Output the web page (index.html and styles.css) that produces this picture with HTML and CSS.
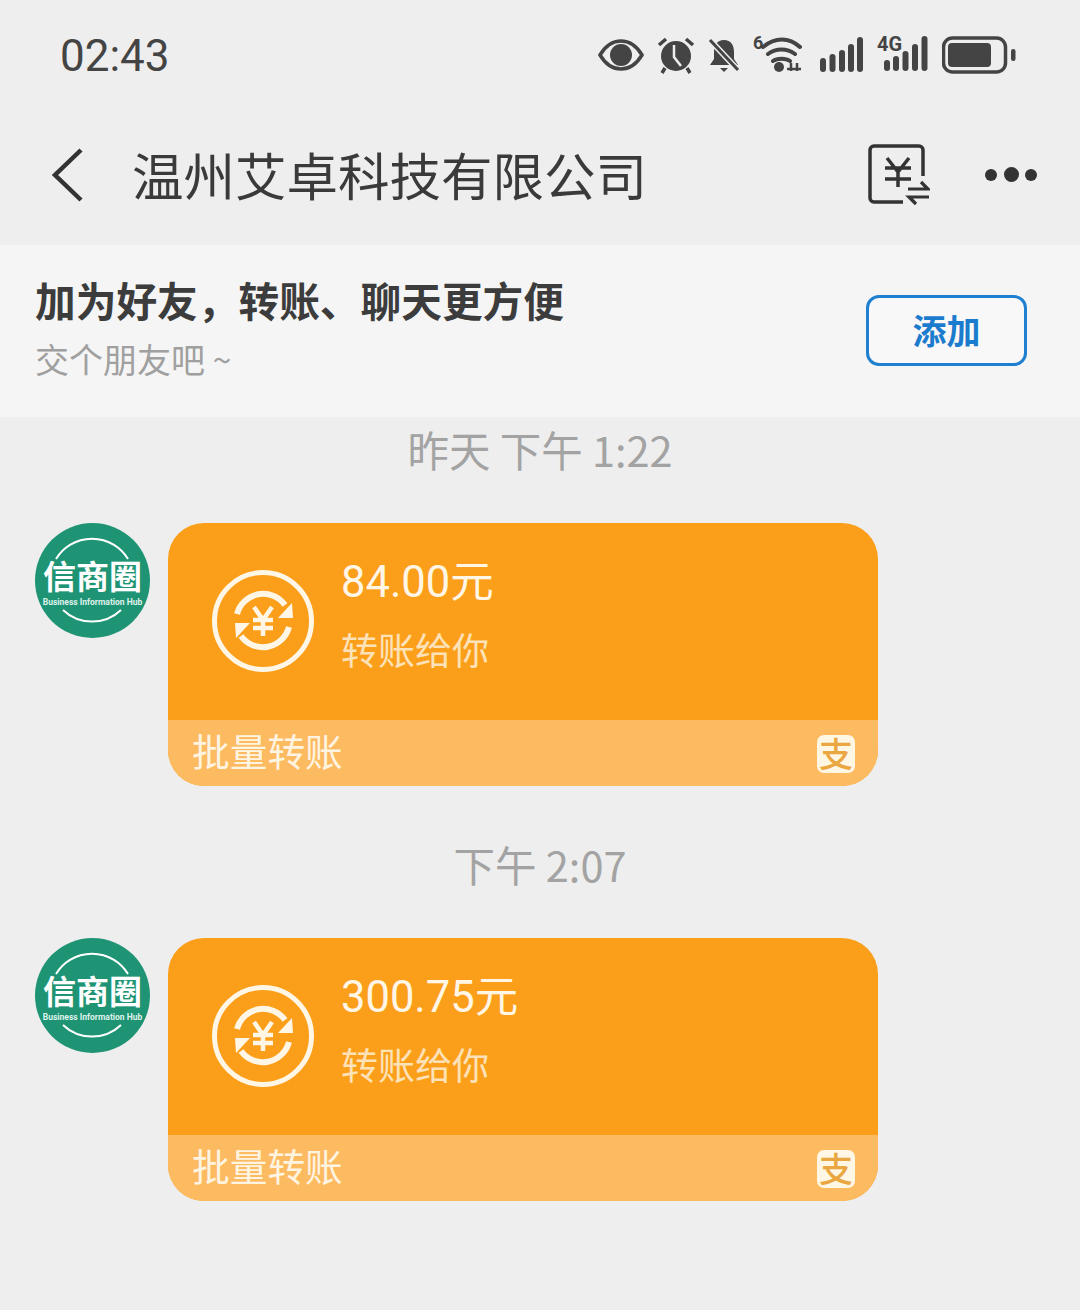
FILE: index.html
```html
<!DOCTYPE html>
<html lang="zh-CN">
<head>
    <meta charset="UTF-8">
    <title>温州艾卓科技有限公司</title>
    <link rel="stylesheet" href="styles.css">
</head>
<body>
    <svg class="defs" width="0" height="0">
        <symbol id="transfer" viewBox="0 0 102 102">
            <circle cx="51" cy="51" r="48.5" fill="none" stroke="#fff6e6" stroke-width="5"/>
            <path d="M25 44A27 27 0 0 1 73 35" fill="none" stroke="#fff6e6" stroke-width="6"/>
            <path d="M66 48L81 48 80 33z" fill="#fff6e6"/>
            <path d="M77 57A27 27 0 0 1 29 66" fill="none" stroke="#fff6e6" stroke-width="6"/>
            <path d="M23 53L38 53 24 68z" fill="#fff6e6"/>
            <path d="M42 37l9 13 9-13M51 50v16M41 50h20M41 58h20" fill="none" stroke="#fff6e6" stroke-width="4.500"/>
        </symbol>
        <symbol id="arcs" viewBox="0 0 115 115">
            <path d="M21 36A42 42 0 0 1 93 36M28 87A42 42 0 0 0 86 87" fill="none" stroke="#fff" stroke-width="2"/>
        </symbol>
    </svg>

    <!-- Status bar -->
    <div class="status-bar">
        <span class="clock">02:43</span>
        <div class="status-icons">
            <svg width="46" height="32" viewBox="0 0 46 32"><path d="M2 16C8 6 15 2 23 2s15 4 21 14c-6 10-13 14-21 14S8 26 2 16z" fill="none" stroke="#444" stroke-width="3.500"/><circle cx="23" cy="16" r="11" fill="#444"/><path d="M17 8a8 8 0 0 0 10 10 8 8 0 0 1-10-10z" fill="#eee"/></svg>
            <svg width="38" height="38" viewBox="0 0 38 38"><circle cx="19" cy="20" r="15" fill="#444"/><path d="M17 9v12l7 9" fill="none" stroke="#eee" stroke-width="2.500"/><path d="M2 9l7-6M36 9l-7-6M8 32l-3 5M30 32l3 5" stroke="#444" stroke-width="3.500"/></svg>
            <svg width="32" height="36" viewBox="0 0 32 36"><path d="M16 3c7 0 10 5 10 12v7l4 6H2l4-6v-7C6 8 9 3 16 3z" fill="#444"/><path d="M12 31h8l-4 4z" fill="#444"/><path d="M2 3l28 30" stroke="#eee" stroke-width="6"/><path d="M2 3l28 30" stroke="#444" stroke-width="3"/></svg>
            <svg class="tall" width="50" height="42" viewBox="0 -4 50 42"><text x="0" y="13" class="mini">6</text><path d="M10 11c12-10 26-10 37 0M15 18c8-6 19-6 27 0M20 25c4-3 13-3 17 0" fill="none" stroke="#444" stroke-width="4" stroke-linecap="round"/><circle cx="26" cy="31" r="5" fill="#444"/><path d="M38 35v-8M44 27v8M34 33h14" stroke="#444" stroke-width="2.500"/></svg>
            <svg class="gap-left" width="44" height="36" viewBox="0 0 44 36"><g fill="#444"><rect x="0" y="21" width="6" height="14" rx="3"/><rect x="9.500" y="17" width="6" height="18" rx="3"/><rect x="19" y="13" width="6" height="22" rx="3"/><rect x="28" y="7" width="6" height="28" rx="3"/><rect x="37" y="0" width="6" height="35" rx="3"/></g></svg>
            <svg class="tall" width="52" height="42" viewBox="0 -4 52 42"><text x="0" y="15" class="mini wide">4G</text><g fill="#444"><rect x="7" y="24" width="6" height="11" rx="3"/><rect x="16" y="20" width="6" height="15" rx="3"/><rect x="25.500" y="15" width="6" height="20" rx="3"/><rect x="35" y="8" width="6" height="27" rx="3"/><rect x="44.500" y="0" width="6" height="35" rx="3"/></g></svg>
            <svg width="74" height="38" viewBox="0 0 74 38"><rect x="1.500" y="2" width="62" height="34" rx="9" fill="none" stroke="#444" stroke-width="3.500"/><rect x="6" y="7" width="43" height="24" rx="4" fill="#444"/><rect x="69" y="13" width="4.500" height="12" rx="2.200" fill="#444"/></svg>
        </div>
    </div>

    <!-- Title bar -->
    <header class="title-bar">
        <svg class="back" width="34" height="56" viewBox="0 0 34 56"><path d="M31 3L5 28l26 25" fill="none" stroke="#333" stroke-width="4.500"/></svg>
        <h1 class="title">温州艾卓科技有限公司</h1>
        <svg class="bill" width="62" height="62" viewBox="0 0 62 62">
            <path d="M55 32V6a4 4 0 0 0-4-4H6a4 4 0 0 0-4 4v48a4 4 0 0 0 4 4h29" fill="none" stroke="#333" stroke-width="3.500"/>
            <path d="M19 14l11 14 11-14M30 28v15M17 24h26M17 35h26" fill="none" stroke="#333" stroke-width="3.500"/>
            <path d="M40 45h20l-7-7M61 53H41l7 7" fill="none" stroke="#333" stroke-width="3.200"/>
        </svg>
        <div class="more"><i></i><i class="big"></i><i></i></div>
    </header>

    <!-- Add friend -->
    <section class="friend-bar">
        <div>
            <div class="friend-title">加为好友，转账、聊天更方便</div>
            <div class="friend-sub">交个朋友吧 ~</div>
        </div>
        <button class="add-btn">添加</button>
    </section>

    <!-- Messages -->
    <div class="time first">昨天 下午 1:22</div>
    <div class="msg">
        <div class="avatar">
            <svg class="avatar-arcs" width="115" height="115"><use href="#arcs"/></svg>
            <div class="avatar-name">信商圈</div>
            <div class="avatar-en">Business Information Hub</div>
        </div>
        <div class="card">
            <div class="card-main">
                <svg class="card-icon" width="102" height="102"><use href="#transfer"/></svg>
                <div>
                    <div class="amount">84.00元</div>
                    <div class="note">转账给你</div>
                </div>
            </div>
            <div class="card-foot">
                <span class="foot-label">批量转账</span>
                <span class="alipay">支</span>
            </div>
        </div>
    </div>

    <div class="time">下午 2:07</div>
    <div class="msg">
        <div class="avatar">
            <svg class="avatar-arcs" width="115" height="115"><use href="#arcs"/></svg>
            <div class="avatar-name">信商圈</div>
            <div class="avatar-en">Business Information Hub</div>
        </div>
        <div class="card">
            <div class="card-main">
                <svg class="card-icon" width="102" height="102"><use href="#transfer"/></svg>
                <div>
                    <div class="amount">300.75元</div>
                    <div class="note">转账给你</div>
                </div>
            </div>
            <div class="card-foot">
                <span class="foot-label">批量转账</span>
                <span class="alipay">支</span>
            </div>
        </div>
    </div>
</body>
</html>
```

FILE: styles.css
```css
body {
    margin: 0;
    background-color: #eeeeee;
    font-family: "Noto Sans CJK SC", "Noto Sans", sans-serif;
    color: #333;
}
.defs {
    display: block;
    height: 0;
}
.status-bar {
    height: 110px;
    display: flex;
    align-items: center;
    justify-content: space-between;
    padding: 0 64px 0 60px;
}
.clock {
    margin-top: 2px;
    font-family: Roboto, sans-serif;
    font-size: 44px;
    color: #444;
}
.status-icons {
    display: flex;
    align-items: center;
    gap: 13px;
}
.status-icons .gap-left {
    margin-left: 4px;
}
.status-icons .tall {
    margin-top: -4px;
}
.mini {
    font-family: Roboto, sans-serif;
    font-size: 18px;
    font-weight: 700;
    fill: #444;
}
.mini.wide {
    font-size: 20px;
}
.title-bar {
    height: 135px;
    box-sizing: border-box;
    display: flex;
    align-items: center;
    padding: 0 43px 6px 50px;
}
.back {
    flex: none;
}
.title {
    flex: 1;
    margin: 0 0 2px 48px;
    font-size: 51.500px;
    font-weight: 400;
    line-height: 1.2;
    color: #3a3a3a;
}
.bill {
    margin-right: 55px;
}
.more {
    display: flex;
    align-items: center;
    gap: 6.500px;
}
.more i {
    width: 12px;
    height: 12px;
    border-radius: 50%;
    background: #333;
}
.more i.big {
    width: 15px;
    height: 15px;
}
.friend-bar {
    height: 172px;
    box-sizing: border-box;
    display: flex;
    align-items: center;
    justify-content: space-between;
    padding: 0 53px 2px 35px;
    background: #f5f5f5;
}
.friend-title {
    font-size: 40.700px;
    font-weight: 700;
    line-height: 56px;
    margin-bottom: 2px;
    color: #3c3c3c;
}
.friend-sub {
    font-size: 34px;
    line-height: 58px;
    color: #a0a0a0;
}
.add-btn {
    width: 161px;
    height: 71px;
    padding: 0 0 2px;
    background: #f8f8f8;
    border: 3px solid #1f7fd0;
    border-radius: 13px;
    font-family: inherit;
    font-size: 34px;
    font-weight: 700;
    color: #1b7ccd;
}
.time {
    height: 60px;
    margin: 48px 0 44px;
    line-height: 60px;
    text-align: center;
    font-size: 41.500px;
    color: #a3a3a3;
}
.time.first {
    margin: 2px 0 44px;
}
.msg {
    display: flex;
    align-items: flex-start;
    gap: 18px;
    padding-left: 35px;
}
.avatar {
    position: relative;
    width: 115px;
    height: 115px;
    box-sizing: border-box;
    padding-top: 4px;
    flex: none;
    border-radius: 50%;
    background: #1f9474;
    color: #fff;
    display: flex;
    flex-direction: column;
    align-items: center;
    justify-content: center;
    overflow: hidden;
}
.avatar-arcs {
    position: absolute;
    left: 0;
    top: 0;
}
.avatar-name {
    font-size: 33px;
    font-weight: 700;
    line-height: 34px;
}
.avatar-en {
    font-family: Roboto, sans-serif;
    font-size: 8.500px;
    font-weight: 700;
    line-height: 10px;
    margin-top: 5px;
    white-space: nowrap;
    color: #dff2ec;
}
.card {
    width: 710px;
    height: 263px;
    border-radius: 36px;
    overflow: hidden;
    background: #fb9f1b;
    display: flex;
    flex-direction: column;
}
.card-main {
    flex: 1;
    display: flex;
    align-items: flex-start;
    padding: 30px 0 0 44px;
    gap: 27px;
}
.card-icon {
    margin-top: 17px;
}
.amount {
    font-family: Roboto, "Noto Sans CJK SC", sans-serif;
    font-size: 43.500px;
    line-height: 60px;
    color: #fff6e6;
}
.note {
    font-size: 37px;
    line-height: 52px;
    margin-top: 10px;
    color: #fde2b8;
}
.card-foot {
    height: 66px;
    flex: none;
    display: flex;
    align-items: center;
    justify-content: space-between;
    padding: 0 23px 0 24px;
    background: #fcbb60;
    font-size: 37.700px;
    color: #fff4e2;
}
.foot-label {
    margin-bottom: 7px;
    line-height: 52px;
}
.alipay {
    width: 38px;
    height: 38px;
    margin-top: 2px;
    border-radius: 7px;
    background: #fff6e3;
    color: #eaa640;
    font-size: 34px;
    font-weight: 500;
    line-height: 36px;
    text-align: center;
}
```
